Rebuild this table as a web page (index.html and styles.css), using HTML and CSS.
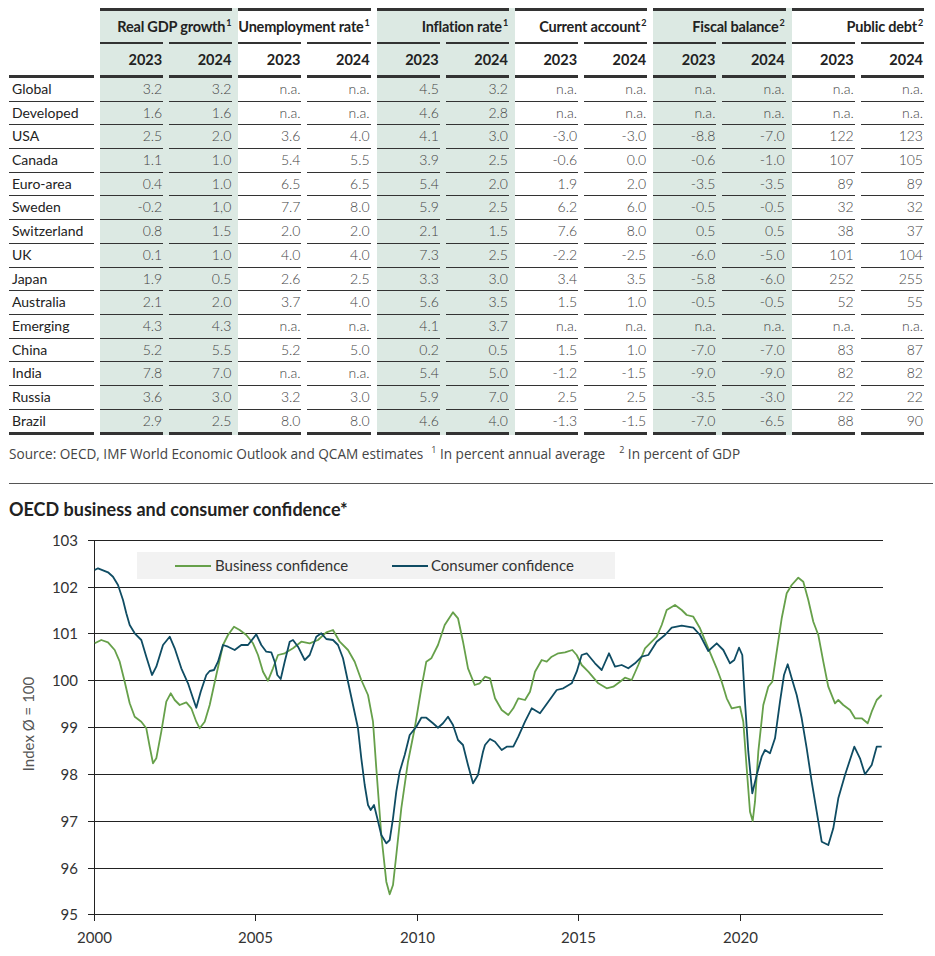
FILE: index.html
```html
<!DOCTYPE html>
<html lang="en">
<head>
    <meta charset="UTF-8">
    <meta name="viewport" content="width=device-width, initial-scale=1.0">
    <title>Economic Outlook</title>
    <link rel="stylesheet" href="styles.css">
</head>
<body>
    <table class="outlook">
        <colgroup>
            <col class="label-col">
            <col span="12">
        </colgroup>
        <thead>
            <tr class="groups">
                <th></th>
                <th colspan="2" class="shade"><div>Real GDP growth<sup>1</sup></div></th>
                <th colspan="2"><div>Unemployment rate<sup>1</sup></div></th>
                <th colspan="2" class="shade"><div>Inflation rate<sup>1</sup></div></th>
                <th colspan="2"><div>Current account<sup>2</sup></div></th>
                <th colspan="2" class="shade"><div>Fiscal balance<sup>2</sup></div></th>
                <th colspan="2"><div>Public debt<sup>2</sup></div></th>
            </tr>
            <tr class="years">
                <th class="label"><div></div></th>
                <th class="shade"><div>2023</div></th>
                <th class="shade"><div>2024</div></th>
                <th><div>2023</div></th>
                <th><div>2024</div></th>
                <th class="shade"><div>2023</div></th>
                <th class="shade"><div>2024</div></th>
                <th><div>2023</div></th>
                <th><div>2024</div></th>
                <th class="shade"><div>2023</div></th>
                <th class="shade"><div>2024</div></th>
                <th><div>2023</div></th>
                <th><div>2024</div></th>
            </tr>
        </thead>
        <tbody id="rows"></tbody>
    </table>

    <p class="source">Source: OECD, IMF World Economic Outlook and QCAM estimates<span class="note first"><sup>1</sup> In percent annual average</span><span class="note"><sup>2</sup> In percent of GDP</span></p>

    <hr class="rule">

    <h2 class="chart-title">OECD business and consumer confidence*</h2>

    <svg class="chart" width="935" height="430" viewBox="0 526 935 430">
        <g class="grid">
            <line x1="88" y1="540.5" x2="883" y2="540.5"/>
            <line x1="88" y1="587.5" x2="883" y2="587.5"/>
            <line x1="88" y1="633.5" x2="883" y2="633.5"/>
            <line x1="88" y1="680.5" x2="883" y2="680.5"/>
            <line x1="88" y1="727.5" x2="883" y2="727.5"/>
            <line x1="88" y1="774.5" x2="883" y2="774.5"/>
            <line x1="88" y1="821.5" x2="883" y2="821.5"/>
            <line x1="88" y1="868.5" x2="883" y2="868.5"/>
            <line x1="88" y1="914.5" x2="883" y2="914.5"/>
            <line x1="94.5" y1="540" x2="94.5" y2="921"/>
            <line x1="255.5" y1="914" x2="255.5" y2="921"/>
            <line x1="417.5" y1="914" x2="417.5" y2="921"/>
            <line x1="578.5" y1="914" x2="578.5" y2="921"/>
            <line x1="740.5" y1="914" x2="740.5" y2="921"/>
        </g>
        <g class="y-labels">
            <text x="78" y="546">103</text>
            <text x="78" y="593">102</text>
            <text x="78" y="639">101</text>
            <text x="78" y="686">100</text>
            <text x="78" y="733">99</text>
            <text x="78" y="780">98</text>
            <text x="78" y="827">97</text>
            <text x="78" y="874">96</text>
            <text x="78" y="920">95</text>
        </g>
        <g class="x-labels">
            <text x="94.5" y="943">2000</text>
            <text x="255.5" y="943">2005</text>
            <text x="417.5" y="943">2010</text>
            <text x="578.5" y="943">2015</text>
            <text x="740.5" y="943">2020</text>
        </g>
        <text class="axis-title" transform="translate(34 724) rotate(-90)">Index Ø = 100</text>

        <rect class="legend-box" x="137" y="552" width="478" height="27"/>
        <line class="business" x1="175" y1="566" x2="211" y2="566"/>
        <text class="legend-text" x="215" y="571">Business confidence</text>
        <line class="consumer" x1="392" y1="566" x2="428" y2="566"/>
        <text class="legend-text" x="431" y="571">Consumer confidence</text>

        <polyline class="business" points="94.7,643.3 101.3,640 108,642.3 114.7,650 119.7,661.7 124.7,681.7 129.7,703.3 134.7,716.7 141.3,721.7 146.3,728.3 149.7,746.7 153,763.3 156.3,758.3 161.3,731.7 166.3,701.7 170.7,693.3 174.7,700 179.7,705 186.3,702.3 191.3,708.3 196.3,721.7 199.7,728.3 204.7,721.7 209.7,705 216.3,675 223,645 228,635 234,626.7 239.7,630 246.3,635 253,643.3 258,655 263,671.7 268,680.7 273,668.3 278,655 284.7,653.3 293,648.3 301.3,641.7 309.7,643.3 318,640 326.3,632.3 333,630 339.7,641.7 348,650 354.7,661.7 361.3,680 368,695 373,721.7 376.3,768.3 381.3,835 386.3,881.7 389.7,894.3 393,885 396.3,855 401.3,808.3 408,761.7 414.7,728.3 421.3,688.3 426.3,661.7 431.3,658.3 438,645 444.7,625 453,612.3 458,618.3 463,641.7 468,668.3 474.7,685 479.7,683.3 485,676.7 490,678.3 495,698.3 501.7,710 508.3,715 513.3,708.3 518.3,698.3 525,700 530,691.7 535,671.7 541.7,660 546.7,661.7 551.7,656.7 558.3,653.3 565,652.3 572.3,650 576.7,655 581.7,665 588.3,671.7 598.3,683.3 606.7,688.3 613.3,686.7 620,681.7 625,677.7 631.7,680 638.3,665 645,648.3 651.7,641.7 656.7,636.7 661.7,625 666.7,610 675,605 681.7,610 686.7,615 693.3,616.7 700,628.3 708.3,648.3 716.7,668.3 721.7,681.7 726.7,698.3 731.7,708.3 740,706.7 743.3,721.7 746.7,768.3 750,811.7 752.7,821 755,801.7 758.3,751.7 763.3,705 768.3,686.7 772.3,681.7 776.7,651.7 781.7,618.3 786.7,593.3 791.7,585 798.3,577.7 803.3,581.7 808.3,600 813.3,621.7 818.3,635 823.3,661.7 828.3,686.7 835,703.3 838.3,700 843.3,705 850,710 855,718.3 861.7,718.3 867.7,723.3 871.7,711.7 876.7,700 881.7,695"/>
        <polyline class="consumer" points="94.7,570 98,568.3 108,572.3 113,576.7 118,585 123,600 126.3,613.3 129.7,625 134.7,633.3 141.3,640 146.3,656.7 152,675 156.3,666.7 163,645 169.7,636.7 174.7,648.3 181.3,668.3 188,683.3 193,698.3 196.3,707.7 200.7,691.7 206.3,675 209.7,671 214,670 218,661.7 223,645 228,646.7 234.7,650 241.3,645 248,645 256.3,634.3 261.3,645 266.3,651.7 271.3,652.3 274.7,661.7 277.3,675 280.7,679 284.7,661.7 289.7,641.7 293,640 298,646.7 304.7,660 309.7,655 316.3,636.7 321.3,633.3 326.3,639 333,640 338,645 343,658.3 348,681.7 353,705 358,728.3 361.3,758.3 364.7,785 368,805 370.7,810 374,805 377.3,818.3 381.3,835 386.3,843.3 389.7,840 393,818.3 396.3,791.7 399.7,771.7 404.7,755 409.7,735 416.3,726.7 421.3,717.7 426.3,717.7 433,723.3 438,727.7 443,723.3 448,716.7 453,725 458,740 463,745 468,765 473,783.3 478,775 483,751.7 485,745 490,739 495,741.7 501.7,750 506.7,746.7 513.3,746.7 518.3,736.7 525,721.7 531.7,708.3 540,713.3 548.3,701.7 556.7,690 563.3,688.3 571.7,683.3 576.7,671.7 581.7,655 586.7,653.3 595,663.3 601.7,670 609,653.3 615,666.7 621.7,665 628.3,668.3 635,663.3 641.7,656.7 648.3,655 656.7,641.7 665,635 671.7,627.7 681.7,625.7 693.3,627.7 700,635 708.3,651 716.7,643.3 723.3,650 730,663.3 734.3,660 739,647.7 742.3,655 745,701.7 748.3,751.7 752.3,793.3 756.7,775 761.7,756.7 765,750 770,753.3 775,738.3 780,701.7 784,675 787.7,664.3 791.7,678.3 796.7,695 801.7,718.3 806.7,748.3 811.7,781.7 816.7,811.7 821.7,841.7 828.3,845 833.3,828.3 838.3,798.3 845,775 854.3,746.7 860,758.3 865,774.3 871.7,765 876.7,746.7 881.7,746.7"/>
    </svg>

    <script>
        const rows = [
            ['Global', '3.2', '3.2', 'n.a.', 'n.a.', '4.5', '3.2', 'n.a.', 'n.a.', 'n.a.', 'n.a.', 'n.a.', 'n.a.'],
            ['Developed', '1.6', '1.6', 'n.a.', 'n.a.', '4.6', '2.8', 'n.a.', 'n.a.', 'n.a.', 'n.a.', 'n.a.', 'n.a.'],
            ['USA', '2.5', '2.0', '3.6', '4.0', '4.1', '3.0', '-3.0', '-3.0', '-8.8', '-7.0', '122', '123'],
            ['Canada', '1.1', '1.0', '5.4', '5.5', '3.9', '2.5', '-0.6', '0.0', '-0.6', '-1.0', '107', '105'],
            ['Euro-area', '0.4', '1.0', '6.5', '6.5', '5.4', '2.0', '1.9', '2.0', '-3.5', '-3.5', '89', '89'],
            ['Sweden', '-0.2', '1,0', '7.7', '8.0', '5.9', '2.5', '6.2', '6.0', '-0.5', '-0.5', '32', '32'],
            ['Switzerland', '0.8', '1.5', '2.0', '2.0', '2.1', '1.5', '7.6', '8.0', '0.5', '0.5', '38', '37'],
            ['UK', '0.1', '1.0', '4.0', '4.0', '7.3', '2.5', '-2.2', '-2.5', '-6.0', '-5.0', '101', '104'],
            ['Japan', '1.9', '0.5', '2.6', '2.5', '3.3', '3.0', '3.4', '3.5', '-5.8', '-6.0', '252', '255'],
            ['Australia', '2.1', '2.0', '3.7', '4.0', '5.6', '3.5', '1.5', '1.0', '-0.5', '-0.5', '52', '55'],
            ['Emerging', '4.3', '4.3', 'n.a.', 'n.a.', '4.1', '3.7', 'n.a.', 'n.a.', 'n.a.', 'n.a.', 'n.a.', 'n.a.'],
            ['China', '5.2', '5.5', '5.2', '5.0', '0.2', '0.5', '1.5', '1.0', '-7.0', '-7.0', '83', '87'],
            ['India', '7.8', '7.0', 'n.a.', 'n.a.', '5.4', '5.0', '-1.2', '-1.5', '-9.0', '-9.0', '82', '82'],
            ['Russia', '3.6', '3.0', '3.2', '3.0', '5.9', '7.0', '2.5', '2.5', '-3.5', '-3.0', '22', '22'],
            ['Brazil', '2.9', '2.5', '8.0', '8.0', '4.6', '4.0', '-1.3', '-1.5', '-7.0', '-6.5', '88', '90']
        ];

        // columns 1-2, 5-6 and 9-10 sit on the shaded bands
        const shaded = [1, 2, 5, 6, 9, 10];
        const tbody = document.getElementById('rows');

        rows.forEach(row => {
            const tr = document.createElement('tr');
            row.forEach((value, i) => {
                const td = document.createElement('td');
                if (i === 0) td.className = 'name';
                if (shaded.includes(i)) td.className = 'shade';
                const div = document.createElement('div');
                div.textContent = value;
                td.appendChild(div);
                tr.appendChild(td);
            });
            tbody.appendChild(tr);
        });
    </script>
</body>
</html>
```

FILE: styles.css
```css
body {
    margin: 0;
    font-family: Lato, "Liberation Sans", sans-serif;
    color: #222;
    background: #fff;
}
.outlook {
    margin: 8px 0 0 9px;
    width: 921px;
    table-layout: fixed;
    border-collapse: collapse;
}
.outlook .label-col {
    width: 91px;
}
.outlook th,
.outlook td {
    padding: 0 6px 0 0;
}
.outlook .shade {
    background: #dce9e3;
}
.outlook th div,
.outlook td div {
    padding-right: 1px;
    text-align: right;
    white-space: nowrap;
}
.groups th div {
    height: 31px;
    line-height: 32px;
    border-top: 3px solid #333;
    font-size: 14.5px;
    font-weight: bold;
    letter-spacing: -0.2px;
}
.years th div {
    height: 31px;
    line-height: 32px;
    border-top: 2px solid #333;
    border-bottom: 3px solid #333;
    font-size: 14.5px;
    font-weight: bold;
}
.years th.label div {
    border-top-color: transparent;
}
.outlook sup {
    font-size: 9px;
    line-height: 0;
    vertical-align: 6px;
    margin-left: 1px;
}
.outlook td div {
    height: 22.7px;
    line-height: 21px;
    border-bottom: 1px solid #333;
    font-size: 14px;
    font-weight: 300;
    color: #444;
}
.outlook td.name div {
    text-align: left;
    padding-left: 3px;
    font-weight: 400;
    color: #222;
}
.outlook tbody tr:last-child td div {
    border-bottom-width: 3px;
}
.source {
    margin: 10px 0 0 9px;
    font-family: "Open Sans", sans-serif;
    font-size: 13.6px;
    line-height: 18px;
    color: #444;
}
.source sup {
    font-size: 9px;
    line-height: 0;
}
.source .note {
    margin-left: 8px;
}
.source .note + .note {
    margin-left: 14px;
}
.rule {
    margin: 20px 0 0 9px;
    width: 924px;
    border: 0;
    border-top: 1px solid #555;
}
.chart-title {
    margin: 14px 0 6px 9px;
    font-size: 18px;
    line-height: 22px;
    font-weight: bold;
    color: #222;
}
.chart {
    display: block;
}
.grid line {
    stroke: #222;
    stroke-width: 1;
}
.chart text {
    font-family: Lato, sans-serif;
    font-size: 15px;
    fill: #333;
}
.y-labels text {
    text-anchor: end;
}
.x-labels text {
    text-anchor: middle;
}
.chart .axis-title {
    text-anchor: middle;
    fill: #555;
}
.legend-box {
    fill: #f2f2f2;
}
.chart .business,
.chart .consumer {
    fill: none;
    stroke-width: 1.8;
    stroke-linejoin: round;
}
.chart .business {
    stroke: #66a04a;
}
.chart .consumer {
    stroke: #0f4c63;
}
```
